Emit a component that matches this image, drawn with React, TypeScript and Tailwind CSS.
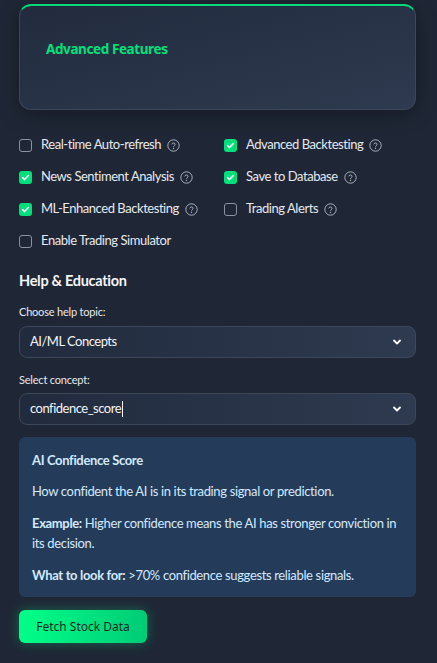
import React from "react";

const Check = ({ checked }: { checked: boolean }) =>
  checked ? (
    <span className="w-[13px] h-[13px] rounded-[3px] bg-[#00e07a] flex items-center justify-center shrink-0">
      <svg width="9" height="9" viewBox="0 0 10 10" fill="none">
        <path d="M1.8 5.2 L4 7.3 L8.2 2.8" stroke="white" strokeWidth="1.8" strokeLinecap="round" strokeLinejoin="round" />
      </svg>
    </span>
  ) : (
    <span className="w-[13px] h-[13px] rounded-[3px] border border-[#8a93a3] shrink-0" />
  );

const Help = () => (
  <svg width="13" height="13" viewBox="0 0 16 16" fill="none" className="shrink-0">
    <circle cx="8" cy="8" r="7" stroke="#aeb4bf" strokeWidth="1.2" />
    <path d="M6 6.2a2 2 0 0 1 3.9.6c0 1.3-1.9 1.5-1.9 2.7" stroke="#aeb4bf" strokeWidth="1.2" strokeLinecap="round" fill="none" />
    <circle cx="8" cy="11.6" r="0.8" fill="#aeb4bf" />
  </svg>
);

const Item = ({ label, checked, help = true }: { label: string; checked: boolean; help?: boolean }) => (
  <div className="flex items-center h-[32px]">
    <Check checked={checked} />
    <span className="ml-[9px] text-[13px] tracking-[-0.45px] text-[#e6e9ee]">{label}</span>
    {help && <span className="ml-[6px] flex"><Help /></span>}
  </div>
);

const Chevron = () => (
  <svg width="12" height="12" viewBox="0 0 12 12" fill="none">
    <path d="M3 4.5 L6 7.5 L9 4.5" stroke="white" strokeWidth="1.8" strokeLinecap="round" strokeLinejoin="round" />
  </svg>
);

export default function App() {
  return (
    <div
      className="w-[437px] h-[663px] bg-[#1f2736] text-white overflow-hidden"
      style={{ fontFamily: '"Lato", "Noto Sans", sans-serif' }}
    >
      <div className="pl-[19px] pr-[21px] pt-[4px]">
        <div className="h-[106px] rounded-[12px] border border-[#3c4759] border-t-[2px] border-t-[#00d977] bg-gradient-to-br from-[#222b3e] to-[#2e3a4f] shadow-[0_4px_20px_rgba(0,0,0,0.35)] flex items-start px-[26px] pt-[33px]">
          <span className="text-[13.5px] tracking-[-0.4px] font-bold text-[#00e27a]" style={{ fontFamily: '"Noto Sans", sans-serif' }}>
            Advanced Features
          </span>
        </div>

        <div className="grid grid-cols-[205px_1fr] mt-[19px]">
          <div className="flex flex-col">
            <Item label="Real-time Auto-refresh" checked={false} />
            <Item label="News Sentiment Analysis" checked={true} />
            <Item label="ML-Enhanced Backtesting" checked={true} />
            <Item label="Enable Trading Simulator" checked={false} help={false} />
          </div>
          <div className="flex flex-col">
            <Item label="Advanced Backtesting" checked={true} />
            <Item label="Save to Database" checked={true} />
            <Item label="Trading Alerts" checked={false} />
          </div>
        </div>

        <div className="mt-[12px] text-[14.5px] leading-[24px] tracking-[-0.3px] font-bold text-[#f2f4f7]">Help &amp; Education</div>

        <div className="mt-[11px] text-[11px] leading-[16px] tracking-[-0.2px] text-[#e6e9ee]">Choose help topic:</div>
        <div className="mt-[6px] h-[32px] rounded-[8px] border border-[#3c4759] bg-gradient-to-r from-[#222b3e] to-[#2e3a4f] flex items-center justify-between pl-[10px] pr-[12px]">
          <span className="text-[13px] tracking-[-0.5px] text-[#f2f4f7]">AI/ML Concepts</span>
          <Chevron />
        </div>

        <div className="mt-[14px] text-[11px] leading-[16px] tracking-[-0.2px] text-[#e6e9ee]">Select concept:</div>
        <div className="mt-[5px] h-[32px] rounded-[8px] border border-[#3c4759] bg-gradient-to-r from-[#222b3e] to-[#2e3a4f] flex items-center justify-between pl-[10px] pr-[12px]">
          <span className="text-[13px] tracking-[-0.5px] text-[#f2f4f7] flex items-center">
            confidence_score<span className="inline-block w-px h-[16px] bg-white ml-px" />
          </span>
          <Chevron />
        </div>

        <div className="mt-[12px] rounded-[6px] bg-[#243c5a] px-[13px] pt-[13px] pb-[12px] text-[13px] tracking-[-0.35px] text-[#d2e9ff] leading-[20px]">
          <div className="font-bold">AI Confidence Score</div>
          <div className="mt-[11px]">How confident the AI is in its trading signal or prediction.</div>
          <div className="mt-[12px]">
            <b>Example:</b> Higher confidence means the AI has stronger conviction in its decision.
          </div>
          <div className="mt-[12px]">
            <b>What to look for:</b> &gt;70% confidence suggests reliable signals.
          </div>
        </div>

        <button
          className="mt-[13px] h-[33px] w-[128px] rounded-[6px] bg-gradient-to-r from-[#00ff88] to-[#00cc77] text-[12px] text-[#0e2a22] shadow-[0_0_12px_rgba(0,255,136,0.3)]"
          style={{ fontFamily: '"Noto Sans", sans-serif' }}
        >
          Fetch Stock Data
        </button>
      </div>
    </div>
  );
}
